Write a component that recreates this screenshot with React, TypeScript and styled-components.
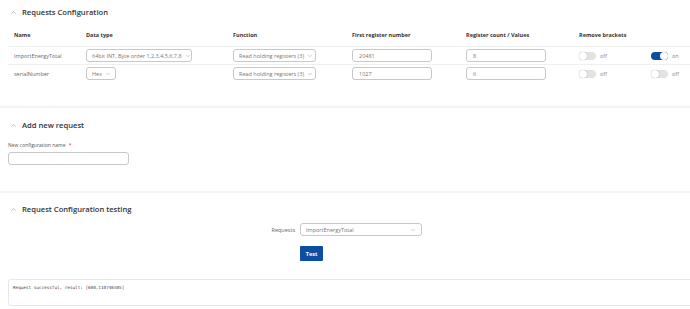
import styled, { createGlobalStyle } from 'styled-components';
import { ChevronUp, ChevronDown } from 'lucide-react';

const GlobalStyle = createGlobalStyle`
  html, body {
    margin: 0;
    padding: 0;
    background: #f3f3f3;
    font-family: 'Open Sans', 'Noto Sans', sans-serif;
    color: #333;
  }
`;

const rows = [
  { name: 'ImportEnergyTotal', dataType: '64bit INT, Byte order 1,2,3,4,5,6,7,8', wide: true, first: '20481', count: '8', on: true },
  { name: 'serialNumber', dataType: 'Hex', wide: false, first: '1027', count: '6', on: false },
];

const App = () => {
  return (
    <>
      <GlobalStyle />
      <Page>
        <Card $top={6} $bottom={23}>
          <SectionTitle>
            <ChevronUp size={7} strokeWidth={1.5} />
            Requests Configuration
          </SectionTitle>
          <Table>
            <HeadRow>
              <div>Name</div>
              <div>Data type</div>
              <div>Function</div>
              <div>First register number</div>
              <div>Register count / Values</div>
              <div>Remove brackets</div>
              <div />
            </HeadRow>
            {rows.map((r, i) => (
              <BodyRow key={r.name} $last={i === rows.length - 1}>
                <NameCell>{r.name}</NameCell>
                <div>
                  <Select $width={r.wide ? 106 : 30}>
                    <span>{r.dataType}</span>
                    <ChevronDown size={6} strokeWidth={1.5} />
                  </Select>
                </div>
                <div>
                  <Select $width={83}>
                    <span>Read holding registers (3)</span>
                    <ChevronDown size={6} strokeWidth={1.5} />
                  </Select>
                </div>
                <div>
                  <Input $width={80}>{r.first}</Input>
                </div>
                <div>
                  <Input $width={80}>{r.count}</Input>
                </div>
                <ToggleWrap>
                  <Toggle $on={false} />
                  <span>off</span>
                </ToggleWrap>
                <ToggleWrap>
                  <Toggle $on={r.on} />
                  <span>{r.on ? 'on' : 'off'}</span>
                </ToggleWrap>
              </BodyRow>
            ))}
          </Table>
        </Card>

        <Card $top={11} $bottom={26}>
          <SectionTitle>
            <ChevronUp size={7} strokeWidth={1.5} />
            Add new request
          </SectionTitle>
          <FieldLabel>
            New configuration name <Required>*</Required>
          </FieldLabel>
          <Input $width={121} />
        </Card>

        <Card $top={10} $bottom={4}>
          <SectionTitle>
            <ChevronUp size={7} strokeWidth={1.5} />
            Request Configuration testing
          </SectionTitle>
          <FormGrid>
            <InlineLabel>Requests</InlineLabel>
            <Select $width={122}>
              <span>ImportEnergyTotal</span>
              <ChevronDown size={6} strokeWidth={1.5} />
            </Select>
            <div />
            <div>
              <Button>Test</Button>
            </div>
          </FormGrid>
          <Output>Request successful, result: [600,110746505]</Output>
        </Card>
      </Page>
    </>
  );
};

const Page = styled.div`
  display: flex;
  flex-direction: column;
  gap: 2px;
  min-height: 309px;
`;

const Card = styled.section<{ $top: number; $bottom: number }>`
  background: #fff;
  padding: ${(p) => p.$top}px 0 ${(p) => p.$bottom}px 8px;
`;

const SectionTitle = styled.div`
  display: flex;
  align-items: center;
  gap: 5px;
  height: 12px;
  padding-left: 2px;
  font-size: 7.6px;
  font-weight: 600;
  color: #333;
  svg {
    color: #666;
  }
`;

const Table = styled.div`
  margin-top: 6px;
`;

const gridCols = `
  display: grid;
  grid-template-columns: 72px 147px 119px 114px 113px 72px 1fr;
  align-items: center;
  padding-left: 6px;
`;

const HeadRow = styled.div`
  ${gridCols};
  height: 22px;
  border-bottom: 1px solid #efefef;
  font-size: 5.5px;
  font-weight: 700;
  color: #333;
`;

const BodyRow = styled.div<{ $last: boolean }>`
  ${gridCols};
  height: 17px;
  border-bottom: 1px solid ${(p) => (p.$last ? 'transparent' : '#efefef')};
  font-size: 5.5px;
  color: #777;
`;

const NameCell = styled.div`
  color: #6a6a6a;
`;

const Select = styled.div<{ $width: number }>`
  box-sizing: border-box;
  display: flex;
  align-items: center;
  justify-content: space-between;
  width: ${(p) => p.$width}px;
  height: 13px;
  padding: 0 5px;
  border: 1px solid #c8c8c8;
  border-radius: 3px;
  background: #fff;
  font-size: 5.5px;
  color: #777;
  white-space: nowrap;
  svg {
    flex-shrink: 0;
    color: #777;
    margin-left: 3px;
  }
`;

const Input = styled.div<{ $width: number }>`
  box-sizing: border-box;
  display: flex;
  align-items: center;
  width: ${(p) => p.$width}px;
  height: 13px;
  padding: 0 6px;
  border: 1px solid #c8c8c8;
  border-radius: 3px;
  background: #fff;
  font-size: 5.5px;
  color: #777;
`;

const ToggleWrap = styled.div`
  display: flex;
  align-items: center;
  gap: 4px;
  font-size: 5.5px;
  color: #888;
`;

const Toggle = styled.div<{ $on: boolean }>`
  position: relative;
  width: 17px;
  height: 8px;
  border-radius: 4px;
  background: ${(p) => (p.$on ? '#0b4ea2' : '#e3e3e3')};
  &::after {
    content: '';
    position: absolute;
    top: 0;
    left: ${(p) => (p.$on ? '9px' : '0')};
    width: 8px;
    height: 8px;
    border-radius: 50%;
    background: #fff;
    box-shadow: 0 0 1px rgba(0, 0, 0, 0.45);
  }
`;

const FieldLabel = styled.div`
  margin-top: 10px;
  margin-bottom: 3px;
  height: 8px;
  line-height: 8px;
  font-size: 5px;
  color: #555;
`;

const Required = styled.span`
  color: #d9412c;
  margin-left: 2px;
`;

const FormGrid = styled.div`
  display: grid;
  grid-template-columns: 287px 122px;
  column-gap: 5px;
  row-gap: 10px;
  align-items: center;
  margin-top: 8px;
`;

const InlineLabel = styled.div`
  text-align: right;
  font-size: 5.5px;
  color: #666;
`;

const Button = styled.button`
  display: block;
  width: 23px;
  height: 15px;
  padding: 0;
  border: none;
  border-radius: 1px;
  background: #0b4ea2;
  color: #fff;
  font-family: 'Open Sans', 'Noto Sans', sans-serif;
  font-size: 5.5px;
  font-weight: 700;
`;

const Output = styled.div`
  box-sizing: border-box;
  margin-top: 18px;
  height: 27px;
  padding: 5px 4px;
  border: 1px solid #e8e8e8;
  border-right: none;
  border-radius: 3px 0 0 3px;
  font-family: 'DejaVu Sans Mono', 'Liberation Mono', monospace;
  font-size: 4.3px;
  color: #444;
`;

export default App;
